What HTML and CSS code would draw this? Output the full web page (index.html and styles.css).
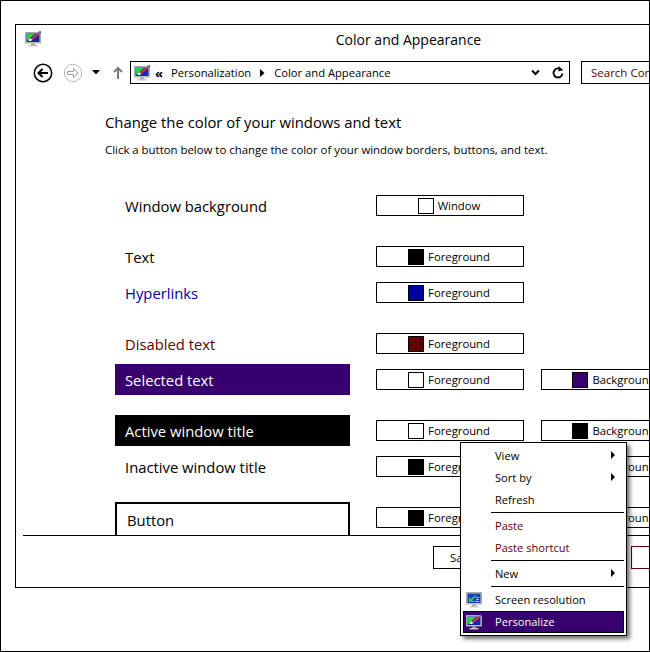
FILE: index.html
```html
<!DOCTYPE html>
<html lang="en">
<head>
<meta charset="utf-8">
<title>Color and Appearance</title>
<link rel="stylesheet" href="styles.css">
</head>
<body>
<svg class="defs" width="0" height="0" aria-hidden="true">
  <symbol id="personal" viewBox="0 0 16 16">
    <rect x="0.5" y="1.5" width="15" height="10.5" fill="#d0d3d6" stroke="#a8acb0"/>
    <rect x="1.5" y="2.5" width="13" height="8.5" fill="#1428a8"/>
    <path d="M2 3h8L6 6.500 4.500 9.500H2z" fill="#30d040"/>
    <path d="M3.500 10 5 7.500l2.500 1L6 10z" fill="#fff"/>
    <path d="M6 7.500 13.500 1.500l1.500 1.200L7.500 8.700z" fill="#e8303a"/>
    <path d="M13 .8 15.800 0v2.800z" fill="#3048d0"/>
    <rect x="6" y="12.500" width="4" height="1.500" fill="#a0a4a8"/>
    <rect x="3.500" y="14" width="9" height="1.500" fill="#c4c8cc"/>
  </symbol>
  <symbol id="screen" viewBox="0 0 16 16">
    <rect x="0.5" y="0.5" width="15" height="11.500" fill="#d0d3d6" stroke="#a8acb0"/>
    <rect x="1.500" y="1.500" width="13" height="9.500" fill="#1a3fb8"/>
    <path d="M9 3 4.500 7.500V5.500H3V10h5V8.700H5.700L10 4.300z" fill="#35d040"/>
    <path d="M10 5h3v1h-3zM10 7h3v1h-3zM9 9h4v1H9z" fill="#9fc4f0"/>
    <rect x="6" y="12.500" width="4" height="1.500" fill="#a0a4a8"/>
    <rect x="3.500" y="14" width="9" height="1.500" fill="#c4c8cc"/>
  </symbol>
</svg>
<div class="desktop">
  <div class="window">
    <div class="titlebar">
      <svg class="icon16 title-icon"><use href="#personal"/></svg>
      <span class="title-text">Color and Appearance</span>
    </div>
    <div class="navrow">
      <svg class="nav-round" viewBox="0 0 20 20"><circle cx="10" cy="10" r="8.700" fill="none" stroke="#000" stroke-width="1.500"/><path d="M15 10H6M9.500 6 5.500 10l4 4" fill="none" stroke="#000" stroke-width="2"/></svg>
      <svg class="nav-round nav-forward" viewBox="0 0 20 20"><circle cx="10" cy="10" r="8.700" fill="none" stroke="#b8b8b8" stroke-width="1"/><path d="M4.500 8.500h6V5.500L15 10l-4.500 4.500v-3h-6z" fill="none" stroke="#a0a0a0" stroke-width="1"/></svg>
      <svg class="nav-drop" viewBox="0 0 8 5"><path d="M0 0h8L4 4.500z" fill="#000"/></svg>
      <svg class="nav-up" viewBox="0 0 10 14"><path d="M5 13V2M1 6l4-4 4 4" fill="none" stroke="#7c7c7c" stroke-width="2"/></svg>
      <div class="address">
        <svg class="icon16"><use href="#personal"/></svg>
        <span class="crumb-more">«</span>
        <span class="crumb">Personalization</span>
        <svg class="crumb-arrow" viewBox="0 0 5 8"><path d="M0 0l4.500 4L0 8z" fill="#000"/></svg>
        <span class="crumb">Color and Appearance</span>
        <svg class="addr-chevron" viewBox="0 0 9 7"><path d="M1 1.500 4.500 5 8 1.500" fill="none" stroke="#000" stroke-width="2"/></svg>
        <svg class="addr-refresh" viewBox="0 0 12 13"><path d="M9.800 4.500A4.500 4.500 0 1 0 10.500 7.500" fill="none" stroke="#000" stroke-width="1.800"/><path d="M6.500 0v5.500l4.500-1.500z" fill="#000"/></svg>
      </div>
      <div class="search">Search Control Panel</div>
    </div>
    <main class="main">
      <h1 class="heading">Change the color of your windows and text</h1>
      <p class="desc">Click a button below to change the color of your window borders, buttons, and text.</p>
      <div class="rows">
        <div class="row">
          <div class="label">Window background</div>
          <button class="cbtn"><span class="swatch"></span>Window</button>
        </div>
        <div class="row group">
          <div class="label">Text</div>
          <button class="cbtn"><span class="swatch s-black"></span>Foreground</button>
        </div>
        <div class="row">
          <div class="label l-link">Hyperlinks</div>
          <button class="cbtn"><span class="swatch s-blue"></span>Foreground</button>
        </div>
        <div class="row group">
          <div class="label l-disabled">Disabled text</div>
          <button class="cbtn"><span class="swatch s-red"></span>Foreground</button>
        </div>
        <div class="row">
          <div class="label l-selected">Selected text</div>
          <button class="cbtn"><span class="swatch"></span>Foreground</button>
          <button class="cbtn"><span class="swatch s-purple"></span>Background</button>
        </div>
        <div class="row group">
          <div class="label l-active">Active window title</div>
          <button class="cbtn"><span class="swatch"></span>Foreground</button>
          <button class="cbtn"><span class="swatch s-black"></span>Background</button>
        </div>
        <div class="row">
          <div class="label">Inactive window title</div>
          <button class="cbtn"><span class="swatch s-black"></span>Foreground</button>
          <button class="cbtn"><span class="swatch"></span>Background</button>
        </div>
        <div class="row group">
          <div class="label l-button">Button</div>
          <button class="cbtn"><span class="swatch s-black"></span>Foreground</button>
          <button class="cbtn"><span class="swatch"></span>Background</button>
        </div>
      </div>
    </main>
    <footer class="footer">
      <button class="fbtn">Save changes</button>
      <button class="fbtn fbtn-cancel">Cancel</button>
    </footer>
  </div>
  <div class="menu">
    <div class="mi">View<i class="arrow"></i></div>
    <div class="mi">Sort by<i class="arrow"></i></div>
    <div class="mi">Refresh</div>
    <div class="sep"></div>
    <div class="mi disabled">Paste</div>
    <div class="mi disabled">Paste shortcut</div>
    <div class="sep"></div>
    <div class="mi">New<i class="arrow"></i></div>
    <div class="sep"></div>
    <div class="mi"><svg class="icon16 mi-icon"><use href="#screen"/></svg>Screen resolution</div>
    <div class="mi active"><svg class="icon16 mi-icon"><use href="#personal"/></svg>Personalize</div>
  </div>
</div>
</body>
</html>
```
FILE: styles.css
```css
* { box-sizing: border-box; }
html, body { margin: 0; padding: 0; background: #fff; }
body { font-family: "Open Sans", "Noto Sans", sans-serif; color: #000; }
.defs { position: absolute; }
.icon16 { width: 16px; height: 16px; display: block; flex: none; }

.desktop {
  position: relative;
  width: 650px;
  height: 652px;
  border: 1px solid #000;
  padding: 23px 0 0 14px;
  overflow: hidden;
  background: #fff;
}
.window {
  width: 786px;
  height: 564px;
  border: 1px solid #000;
  display: flex;
  flex-direction: column;
  overflow: hidden;
}
.titlebar {
  height: 30px;
  flex: none;
  display: flex;
  align-items: center;
  justify-content: center;
  position: relative;
}
.title-icon { position: absolute; left: 9px; top: 6px; }
.title-text { font-size: 14px; line-height: 20px; margin-left: 1px; }

.navrow {
  margin-top: 6px;
  height: 23px;
  flex: none;
  display: flex;
  align-items: center;
  padding-left: 17px;
}
.nav-round { width: 20px; height: 20px; flex: none; }
.nav-forward { margin-left: 10px; }
.nav-drop { width: 8px; height: 5px; margin-left: 9px; flex: none; }
.nav-up { width: 10px; height: 14px; margin-left: 13px; flex: none; }
.address {
  margin-left: 7px;
  width: 440px;
  height: 23px;
  border: 1px solid #000;
  display: flex;
  align-items: center;
  padding-left: 3px;
  flex: none;
  font-size: 11.2px;
}
.crumb-more { margin-left: 5px; width: 16px; font-size: 13px; font-weight: 700; line-height: 16px; }
.crumb { white-space: nowrap; }
.crumb-arrow { width: 5px; height: 8px; margin: 0 9px 0 9px; flex: none; }
.addr-chevron { width: 9px; height: 7px; margin-left: auto; flex: none; }
.addr-refresh { width: 12px; height: 13px; margin: 0 5px 0 12px; flex: none; }
.search {
  margin-left: 11px;
  width: 200px;
  height: 23px;
  border: 1px solid #000;
  padding-left: 9px;
  font-size: 11.5px;
  line-height: 21px;
  color: #600000;
  flex: none;
  white-space: nowrap;
}

.main {
  flex: 1;
  min-height: 0;
  overflow: hidden;
  padding-left: 89px;
}
.heading {
  margin: 28px 0 0;
  font-size: 14.85px;
  line-height: 20px;
  font-weight: 400;
}
.desc {
  margin: 10px 0 0;
  font-size: 11.4px;
  line-height: 16px;
}
.rows {
  margin: 32px 0 0 10px;
  display: flex;
  flex-direction: column;
  gap: 5px;
}
.row {
  display: grid;
  grid-template-columns: 261px 165px 148px;
  align-items: start;
  justify-items: start;
}
.group { margin-top: 15px; }
.label {
  width: 235px;
  height: 31px;
  padding-left: 10px;
  font-size: 14.8px;
  line-height: 32px;
}
.l-link { color: #00009f; }
.l-disabled { color: #600000; }
.l-selected { background: #37006e; color: #fff; }
.l-active { background: #000; color: #fff; }
.l-button {
  height: 38px;
  border: 2px solid #000;
  line-height: 33px;
}
.cbtn {
  margin-top: 5px;
  width: 148px;
  height: 21px;
  border: 1px solid #000;
  background: #fff;
  padding: 0 2px 0 0;
  display: flex;
  align-items: center;
  justify-content: center;
  gap: 4px;
  font: 11.3px/19px "Open Sans", "Noto Sans", sans-serif;
  color: #000;
}
.swatch {
  width: 16px;
  height: 16px;
  border: 1px solid #000;
  background: #fff;
  flex: none;
}
.s-black { background: #000; }
.s-blue { background: #00009f; }
.s-red { background: #600000; }
.s-purple { background: #37006e; }

.footer {
  flex: none;
  height: 52px;
  margin-left: 7px;
  border-top: 1px solid #000;
  padding: 10px 0 0 410px;
  display: flex;
  align-items: flex-start;
}
.fbtn {
  height: 23px;
  width: 105px;
  border: 1px solid #000;
  background: #fff;
  padding: 0;
  font: 11.3px/21px "Open Sans", "Noto Sans", sans-serif;
  color: #000;
  flex: none;
}
.fbtn-cancel { margin-left: 93px; width: 75px; border-color: #600000; }

.menu {
  position: absolute;
  left: 459px;
  top: 441px;
  width: 167px;
  height: 194px;
  background: #fff;
  border: 1px solid #000;
  padding: 2px;
  box-shadow: 3px 3px 4px rgba(0, 0, 0, 0.55);
  font-size: 11.1px;
}
.mi {
  position: relative;
  height: 22px;
  line-height: 21px;
  padding-left: 32px;
}
.mi.disabled { color: #600000; }
.mi.active { background: #37006e; color: #fff; outline: 1px solid #000; outline-offset: -1px; }
.mi-icon { position: absolute; left: 3px; top: 3px; }
.arrow {
  position: absolute;
  left: 148px;
  top: 6px;
  width: 0;
  height: 0;
  border-left: 4px solid #000;
  border-top: 4px solid transparent;
  border-bottom: 4px solid transparent;
}
.sep {
  height: 4px;
  margin-left: 28px;
  padding-top: 1px;
}
.sep::before {
  content: "";
  display: block;
  height: 1px;
  background: #000;
}
```
